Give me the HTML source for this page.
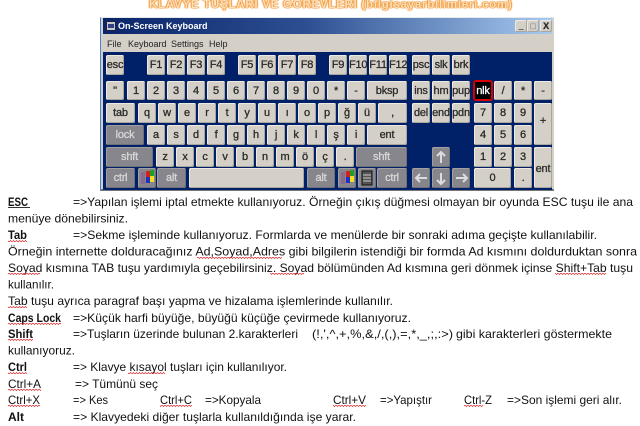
<!DOCTYPE html>
<html><head><meta charset="utf-8"><style>
html,body{margin:0;padding:0;background:#fff;width:640px;height:426px;overflow:hidden}
#w{position:absolute;left:100px;top:17px;width:454px;height:174px;background:#d4d0c8;border-left:1px solid #4a86c8;border-top:1px solid #e8e8e8;border-bottom:2px solid #777;box-sizing:border-box}
#tb{position:absolute;left:103px;top:18px;width:449px;height:16px;background:linear-gradient(90deg,#0a246a,#2d4f92 45%,#a6caf0)}
#tt{position:absolute;left:118px;top:19px;font:bold 9px/14px "Liberation Sans",sans-serif;color:#fff;white-space:nowrap;filter:blur(.25px)}
#kb{position:absolute;left:103px;top:52px;width:449px;height:138px;background:#002068}
.m{position:absolute;top:38px;font:9px/12px "Liberation Sans",sans-serif;color:#222;filter:blur(.3px)}
.k{position:absolute;width:18px;height:20px;background:#d4d0c8;border-radius:2px;box-shadow:inset -1px -1px 0 #aaa69e,inset 1px 1px 0 #eeeae2;font:11px/20px "Liberation Sans",sans-serif;-webkit-text-stroke:.3px currentColor;letter-spacing:-.2px;color:#2a2a2a;text-align:center;filter:blur(.35px);white-space:nowrap;overflow:hidden}
.d{background:#86868c;color:#d8d8d8;box-shadow:inset -1px -1px 0 #707078,inset 1px 1px 0 #a0a0a0}
.b{position:absolute}
text{font-family:"Liberation Sans",sans-serif;font-size:12px;fill:#111}
.h{font-weight:bold;fill:#111}
svg{position:absolute;left:0;top:0}
</style></head><body>
<div style="position:absolute;left:149px;top:-1px;width:350px;text-align:center;font:bold 11.5px/12px 'Liberation Sans',sans-serif;letter-spacing:.75px;color:#fbe0bc;text-shadow:0 0 1px #f08a20,0 0 1px #f08a20,1px 0 1px #f49a38,-1px 0 1px #f49a38;white-space:nowrap">KLAVYE TUŞLARI VE GÖREVLERİ (bilgisayarbilimleri.com)</div>
<div id="w"></div><div id="tb"></div>
<div class="b" style="left:106px;top:21px;width:10px;height:10px;background:#c8c8d0;border:1px solid #202040;box-sizing:border-box"><div style="margin:2px 1px;height:4px;background:#304080"></div></div>
<div id="tt">On-Screen Keyboard</div>
<div class="k" style="left:515px;top:20px;width:12px;height:12px;font:bold 8px/13px 'Liberation Sans',sans-serif">_</div>
<div class="k" style="left:527px;top:20px;width:12px;height:12px;color:#999;font:bold 9px/12px 'Liberation Sans',sans-serif">□</div>
<div class="k" style="left:540px;top:20px;width:12px;height:12px;font:bold 9px/12px 'Liberation Sans',sans-serif">X</div>
<div class="m" style="left:107px">File</div><div class="m" style="left:128px">Keyboard</div><div class="m" style="left:171px">Settings</div><div class="m" style="left:209px">Help</div>
<div id="kb"></div>

<div class="k" style="left:106px;top:55px">esc</div>
<div class="k" style="left:147px;top:55px">F1</div><div class="k" style="left:167px;top:55px">F2</div><div class="k" style="left:187px;top:55px">F3</div><div class="k" style="left:207px;top:55px">F4</div>
<div class="k" style="left:238px;top:55px">F5</div><div class="k" style="left:258px;top:55px">F6</div><div class="k" style="left:278px;top:55px">F7</div><div class="k" style="left:298px;top:55px">F8</div>
<div class="k" style="left:329px;top:55px">F9</div><div class="k" style="left:349px;top:55px">F10</div><div class="k" style="left:369px;top:55px">F11</div><div class="k" style="left:389px;top:55px">F12</div>
<div class="k" style="left:412px;top:55px">psc</div><div class="k" style="left:432px;top:55px">slk</div><div class="k" style="left:452px;top:55px">brk</div>

<div class="k" style="left:106px;top:81px;height:19px">"</div>
<div class="k" style="left:127px;top:81px;height:19px">1</div><div class="k" style="left:147px;top:81px;height:19px">2</div><div class="k" style="left:167px;top:81px;height:19px">3</div><div class="k" style="left:187px;top:81px;height:19px">4</div><div class="k" style="left:207px;top:81px;height:19px">5</div><div class="k" style="left:227px;top:81px;height:19px">6</div><div class="k" style="left:247px;top:81px;height:19px">7</div><div class="k" style="left:267px;top:81px;height:19px">8</div><div class="k" style="left:287px;top:81px;height:19px">9</div><div class="k" style="left:307px;top:81px;height:19px">0</div><div class="k" style="left:327px;top:81px;height:19px">*</div><div class="k" style="left:347px;top:81px;height:19px">-</div>
<div class="k" style="left:367px;top:81px;height:19px;width:40px">bksp</div>
<div class="k" style="left:412px;top:81px;height:19px">ins</div><div class="k" style="left:432px;top:81px;height:19px">hm</div><div class="k" style="left:452px;top:81px;height:19px">pup</div>
<div class="k" style="left:474px;top:81px;height:19px;background:#000;color:#fff;box-shadow:0 0 0 1px #d80000,inset 0 0 0 1px #d80000">nlk</div>
<div class="k" style="left:494px;top:81px;height:19px">/</div><div class="k" style="left:514px;top:81px;height:19px">*</div><div class="k" style="left:534px;top:81px;height:19px">-</div>

<div class="k" style="left:106px;top:103px;width:29px">tab</div>
<div class="k" style="left:138px;top:103px">q</div><div class="k" style="left:158px;top:103px">w</div><div class="k" style="left:178px;top:103px">e</div><div class="k" style="left:198px;top:103px">r</div><div class="k" style="left:218px;top:103px">t</div><div class="k" style="left:238px;top:103px">y</div><div class="k" style="left:258px;top:103px">u</div><div class="k" style="left:278px;top:103px">ı</div><div class="k" style="left:298px;top:103px">o</div><div class="k" style="left:318px;top:103px">p</div><div class="k" style="left:338px;top:103px">ğ</div><div class="k" style="left:358px;top:103px">ü</div>
<div class="k" style="left:378px;top:103px;width:29px">,</div>
<div class="k" style="left:412px;top:103px">del</div><div class="k" style="left:432px;top:103px">end</div><div class="k" style="left:452px;top:103px">pdn</div>
<div class="k" style="left:474px;top:103px">7</div><div class="k" style="left:494px;top:103px">8</div><div class="k" style="left:514px;top:103px">9</div>
<div class="k" style="left:534px;top:103px;height:42px;line-height:36px">+</div>

<div class="k d" style="left:106px;top:125px;width:38px">lock</div>
<div class="k" style="left:147px;top:125px">a</div><div class="k" style="left:167px;top:125px">s</div><div class="k" style="left:187px;top:125px">d</div><div class="k" style="left:207px;top:125px">f</div><div class="k" style="left:227px;top:125px">g</div><div class="k" style="left:247px;top:125px">h</div><div class="k" style="left:267px;top:125px">j</div><div class="k" style="left:287px;top:125px">k</div><div class="k" style="left:307px;top:125px">l</div><div class="k" style="left:327px;top:125px">ş</div><div class="k" style="left:347px;top:125px">i</div>
<div class="k" style="left:367px;top:125px;width:40px">ent</div>
<div class="k" style="left:474px;top:125px">4</div><div class="k" style="left:494px;top:125px">5</div><div class="k" style="left:514px;top:125px">6</div>

<div class="k d" style="left:106px;top:147px;width:47px">shft</div>
<div class="k" style="left:156px;top:147px">z</div><div class="k" style="left:176px;top:147px">x</div><div class="k" style="left:196px;top:147px">c</div><div class="k" style="left:216px;top:147px">v</div><div class="k" style="left:236px;top:147px">b</div><div class="k" style="left:256px;top:147px">n</div><div class="k" style="left:276px;top:147px">m</div><div class="k" style="left:296px;top:147px">ö</div><div class="k" style="left:316px;top:147px">ç</div><div class="k" style="left:336px;top:147px">.</div>
<div class="k d" style="left:356px;top:147px;width:51px">shft</div>
<div class="k d" style="left:432px;top:147px"></div>
<div class="k" style="left:474px;top:147px">1</div><div class="k" style="left:494px;top:147px">2</div><div class="k" style="left:514px;top:147px">3</div>
<div class="k" style="left:534px;top:147px;height:41px;line-height:44px">ent</div>

<div class="k d" style="left:106px;top:168px;width:29px">ctrl</div>
<div class="k d" style="left:138px;top:168px"></div>
<div class="k d" style="left:157px;top:168px;width:29px">alt</div>
<div class="k" style="left:189px;top:168px;width:115px"></div>
<div class="k d" style="left:307px;top:168px;width:28px">alt</div>
<div class="k d" style="left:338px;top:168px"></div>
<div class="k d" style="left:358px;top:168px"></div>
<div class="k d" style="left:377px;top:168px;width:30px">ctrl</div>
<div class="k d" style="left:412px;top:168px"></div><div class="k d" style="left:432px;top:168px"></div><div class="k d" style="left:452px;top:168px"></div>
<div class="k" style="left:474px;top:168px;width:37px">0</div><div class="k" style="left:514px;top:168px">.</div>

<svg width="640" height="426" viewBox="0 0 640 426" style="filter:blur(.3px)">
<defs><pattern id="z" width="3" height="2" patternUnits="userSpaceOnUse"><path d="M0 2L1.5 .5L3 2" fill="none" stroke="#e02020" stroke-width=".7"/></pattern></defs>
<!-- arrows -->
<g fill="none" stroke="#dcdcdc" stroke-width="2">
<path d="M441 152V163M437 156L441 152L445 156"/>
<path d="M441 173V184M437 180L441 184L445 180"/>
<path d="M416 178H427M420 174L416 178L420 182"/>
<path d="M456 178H467M463 174L467 178L463 182"/>
</g>
<!-- Windows logos -->
<rect x="141" y="172" width="4" height="12" fill="#8a6a90"/><rect x="146" y="171" width="4" height="6" fill="#d02020"/><rect x="150" y="170" width="4" height="6" fill="#20a020"/><rect x="146" y="177" width="4" height="6" fill="#2030c0"/><rect x="150" y="176" width="4" height="6" fill="#f0e020"/>
<rect x="341" y="172" width="4" height="12" fill="#8a6a90"/><rect x="346" y="171" width="4" height="6" fill="#d02020"/><rect x="350" y="170" width="4" height="6" fill="#20a020"/><rect x="346" y="177" width="4" height="6" fill="#2030c0"/><rect x="350" y="176" width="4" height="6" fill="#f0e020"/>
<rect x="362" y="171" width="10" height="14" fill="#555" stroke="#111"/><path d="M363 175h8M363 178h8M363 181h8" stroke="#ccc"/>

<text x="8" y="206" class="h" textLength="20" lengthAdjust="spacingAndGlyphs">ESC</text><rect x="8" y="207" width="22" height="1" fill="#333"/>
<text x="73" y="206" textLength="560" lengthAdjust="spacingAndGlyphs">=&gt;Yapılan işlemi iptal etmekte kullanıyoruz. Örneğin çıkış düğmesi olmayan bir oyunda ESC tuşu ile ana</text>
<text x="8" y="222.5" textLength="120" lengthAdjust="spacingAndGlyphs">menüye dönebilirsiniz.</text>
<text x="8" y="239" class="h" textLength="19" lengthAdjust="spacingAndGlyphs">Tab</text><rect x="8" y="240" width="19" height="2" fill="url(#z)"/>
<text x="73" y="239" textLength="524" lengthAdjust="spacingAndGlyphs">=&gt;Sekme işleminde kullanıyoruz. Formlarda ve menülerde bir sonraki adıma geçişte kullanılabilir.</text>
<text x="8" y="255.5" textLength="629" lengthAdjust="spacingAndGlyphs">Örneğin internette dolduracağınız  Ad,Soyad,Adres gibi bilgilerin istendiği bir formda Ad kısmını doldurduktan sonra</text><rect x="197" y="257" width="85" height="2" fill="url(#z)"/>
<text x="8" y="272" textLength="625" lengthAdjust="spacingAndGlyphs">Soyad kısmına TAB tuşu yardımıyla geçebilirsiniz.  Soyad bölümünden Ad kısmına geri dönmek içinse Shift+Tab tuşu</text><rect x="8" y="273" width="32" height="2" fill="url(#z)"/><rect x="270" y="273" width="34" height="2" fill="url(#z)"/><rect x="555" y="273" width="51" height="2" fill="url(#z)"/>
<text x="8" y="288.5" textLength="46" lengthAdjust="spacingAndGlyphs">kullanılır.</text>
<text x="8" y="305" textLength="385" lengthAdjust="spacingAndGlyphs">Tab tuşu ayrıca paragraf başı yapma ve hizalama işlemlerinde kullanılır.</text><rect x="8" y="306" width="19" height="2" fill="url(#z)"/>
<text x="8" y="322" class="h" textLength="53" lengthAdjust="spacingAndGlyphs">Caps Lock</text><rect x="8" y="323" width="53" height="2" fill="url(#z)"/>
<text x="73" y="322" textLength="338" lengthAdjust="spacingAndGlyphs">=&gt;Küçük harfi büyüğe, büyüğü küçüğe çevirmede kullanıyoruz.</text>
<text x="8" y="338" class="h" textLength="25" lengthAdjust="spacingAndGlyphs">Shift</text><rect x="8" y="339" width="25" height="2" fill="url(#z)"/>
<text x="73" y="338" textLength="225" lengthAdjust="spacingAndGlyphs">=&gt;Tuşların üzerinde bulunan 2.karakterleri</text>
<text x="312" y="338" textLength="141" lengthAdjust="spacingAndGlyphs">(!,',^,+,%,&amp;,/,(,),=,*,_,;,:&gt;)</text>
<text x="456" y="338" textLength="156" lengthAdjust="spacingAndGlyphs">gibi karakterleri göstermekte</text>
<text x="8" y="354.5" textLength="67" lengthAdjust="spacingAndGlyphs">kullanıyoruz.</text>
<text x="8" y="371" class="h" textLength="19" lengthAdjust="spacingAndGlyphs">Ctrl</text><rect x="8" y="372" width="19" height="2" fill="url(#z)"/>
<text x="73" y="371" textLength="214" lengthAdjust="spacingAndGlyphs">=&gt; Klavye kısayol tuşları için kullanılıyor.</text><rect x="128" y="372" width="37" height="2" fill="url(#z)"/>
<text x="8" y="388" textLength="33" lengthAdjust="spacingAndGlyphs">Ctrl+A</text><rect x="8" y="389" width="33" height="2" fill="url(#z)"/>
<text x="75" y="388" textLength="83" lengthAdjust="spacingAndGlyphs">=&gt; Tümünü seç</text>
<text x="8" y="404" textLength="32" lengthAdjust="spacingAndGlyphs">Ctrl+X</text><rect x="8" y="405" width="32" height="2" fill="url(#z)"/>
<text x="73" y="404" textLength="35" lengthAdjust="spacingAndGlyphs">=&gt; Kes</text>
<text x="160" y="404" textLength="32" lengthAdjust="spacingAndGlyphs">Ctrl+C</text><rect x="160" y="405" width="32" height="2" fill="url(#z)"/>
<text x="205" y="404" textLength="56" lengthAdjust="spacingAndGlyphs">=&gt;Kopyala</text>
<text x="333" y="404" textLength="33" lengthAdjust="spacingAndGlyphs">Ctrl+V</text><rect x="333" y="405" width="33" height="2" fill="url(#z)"/>
<text x="380" y="404" textLength="52" lengthAdjust="spacingAndGlyphs">=&gt;Yapıştır</text>
<text x="464" y="404" textLength="28" lengthAdjust="spacingAndGlyphs">Ctrl-Z</text><rect x="464" y="405" width="19" height="2" fill="url(#z)"/>
<text x="507" y="404" textLength="115" lengthAdjust="spacingAndGlyphs">=&gt;Son işlemi geri alır.</text>
<text x="8" y="421" class="h" textLength="16" lengthAdjust="spacingAndGlyphs">Alt</text>
<text x="73" y="421" textLength="283" lengthAdjust="spacingAndGlyphs">=&gt; Klavyedeki diğer tuşlarla kullanıldığında işe yarar.</text>
</svg>
</body></html>
